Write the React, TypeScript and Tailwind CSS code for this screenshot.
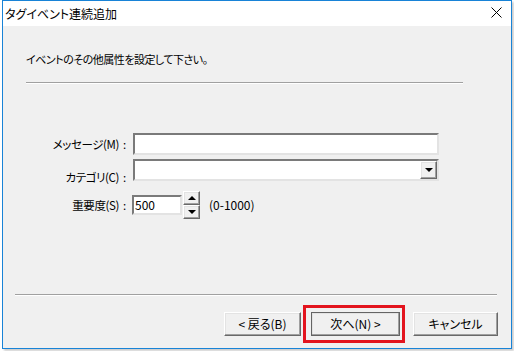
import React from 'react';

const font = { fontFamily: '"Noto Sans CJK JP", "Noto Sans", sans-serif' };

const raised =
  'border border-t-white border-l-white border-r-[#696969] border-b-[#696969] shadow-[inset_-1px_-1px_0_#a0a0a0,inset_1px_1px_0_#e3e3e3] bg-[#f0f0f0]';

const sunken =
  'border-2 border-t-[#7a7a7a] border-l-[#7a7a7a] border-r-[#e3e3e3] border-b-[#e3e3e3] bg-white';

const Tri = ({ up = false }: { up?: boolean }) => (
  <svg width="8" height="4" viewBox="0 0 8 4">
    <polygon points={up ? '0,4 8,4 4,0' : '0,0 8,0 4,4'} fill="#000" />
  </svg>
);

const Label = ({ children }: { children: React.ReactNode }) => (
  <div className="w-[127px] flex justify-end items-center text-[11.5px] leading-[16px] text-black">
    <span className="[font-feature-settings:'palt'] tracking-[-0.4px]">{children}</span>
    <span className="w-[11px] text-center">:</span>
  </div>
);

export default function App() {
  return (
    <div className="w-[514px] h-[351px] bg-white relative overflow-hidden" style={font}>
      <div className="ml-[2px] w-[510px] h-[349px] border border-[#1883d7] bg-[#f0f0f0] flex flex-col shadow-[2px_2px_2px_rgba(0,0,0,0.2)]">
        {/* title bar */}
        <div className="h-[25px] bg-white flex items-center justify-between pl-[2px] pr-[9px]">
          <span className="text-[12px] text-black [font-feature-settings:'palt']">タグイベント連続追加</span>
          <svg width="11" height="11" viewBox="0 0 11 11" className="-mt-[2px]">
            <path d="M0.5 0.5 L10.5 10.5 M10.5 0.5 L0.5 10.5" stroke="#000" strokeWidth="1" />
          </svg>
        </div>

        {/* heading */}
        <div className="mt-[25px] pl-[23px] text-[11px] leading-[16px] text-black [font-feature-settings:'palt'] tracking-[-0.5px]">
          イベントのその他属性を設定して下さい。
        </div>
        <div className="mt-[15px] ml-[23px] w-[437px] border-t border-t-[#a0a0a0] border-b border-b-white" />

        {/* form */}
        <div className="mt-[49px] flex flex-col">
          <div className="flex items-center gap-[3px]">
            <Label>メッセージ(M)</Label>
            <div className={`${sunken} w-[306px] h-[22px]`} />
          </div>
          <div className="mt-[4px] flex items-start gap-[3px]">
            <div className="pt-[10px]">
              <Label>カテゴリ(C)</Label>
            </div>
            <div className={`${sunken} w-[306px] h-[22px] flex justify-end items-center`}>
              <div className={`${raised} w-[17px] h-[18px] flex items-center justify-center`}>
                <Tri />
              </div>
            </div>
          </div>
          <div className="mt-[6px] flex items-center">
            <Label>重要度(S)</Label>
            <div className={`${sunken} ml-[2px] w-[50px] h-[20px] flex items-center pl-[1px] text-[12px] text-black`}>
              500
            </div>
            <div className="ml-[1px] flex flex-col">
              <div className={`${raised} w-[17px] h-[14px] flex items-center justify-center`}>
                <Tri up />
              </div>
              <div className={`${raised} w-[17px] h-[14px] flex items-center justify-center`}>
                <Tri />
              </div>
            </div>
            <span className="ml-[9px] text-[12px] text-black">(0-1000)</span>
          </div>
        </div>

        {/* footer */}
        <div className="mt-auto ml-[12px] w-[482px] border-t border-t-[#a0a0a0] border-b border-b-white" />
        <div className="mt-[16px] mb-[12px] pr-[13px] flex justify-end items-center text-[12px] text-black [font-feature-settings:'palt']">
          <button className={`${raised} w-[77px] h-[24px]`}>&lt; 戻る(B)</button>
          <button
            className={`${raised} ml-[10px] w-[89px] h-[24px] outline outline-1 outline-[#646464] -outline-offset-1`}
          >
            次へ(N) &gt;
          </button>
          <button className={`${raised} ml-[13px] w-[85px] h-[24px]`}>キャンセル</button>
        </div>
      </div>

      {/* highlight annotation */}
      <div className="absolute left-[303px] top-[305px] w-[102px] h-[38px] border-[3px] border-[#e3141e]" />
    </div>
  );
}
